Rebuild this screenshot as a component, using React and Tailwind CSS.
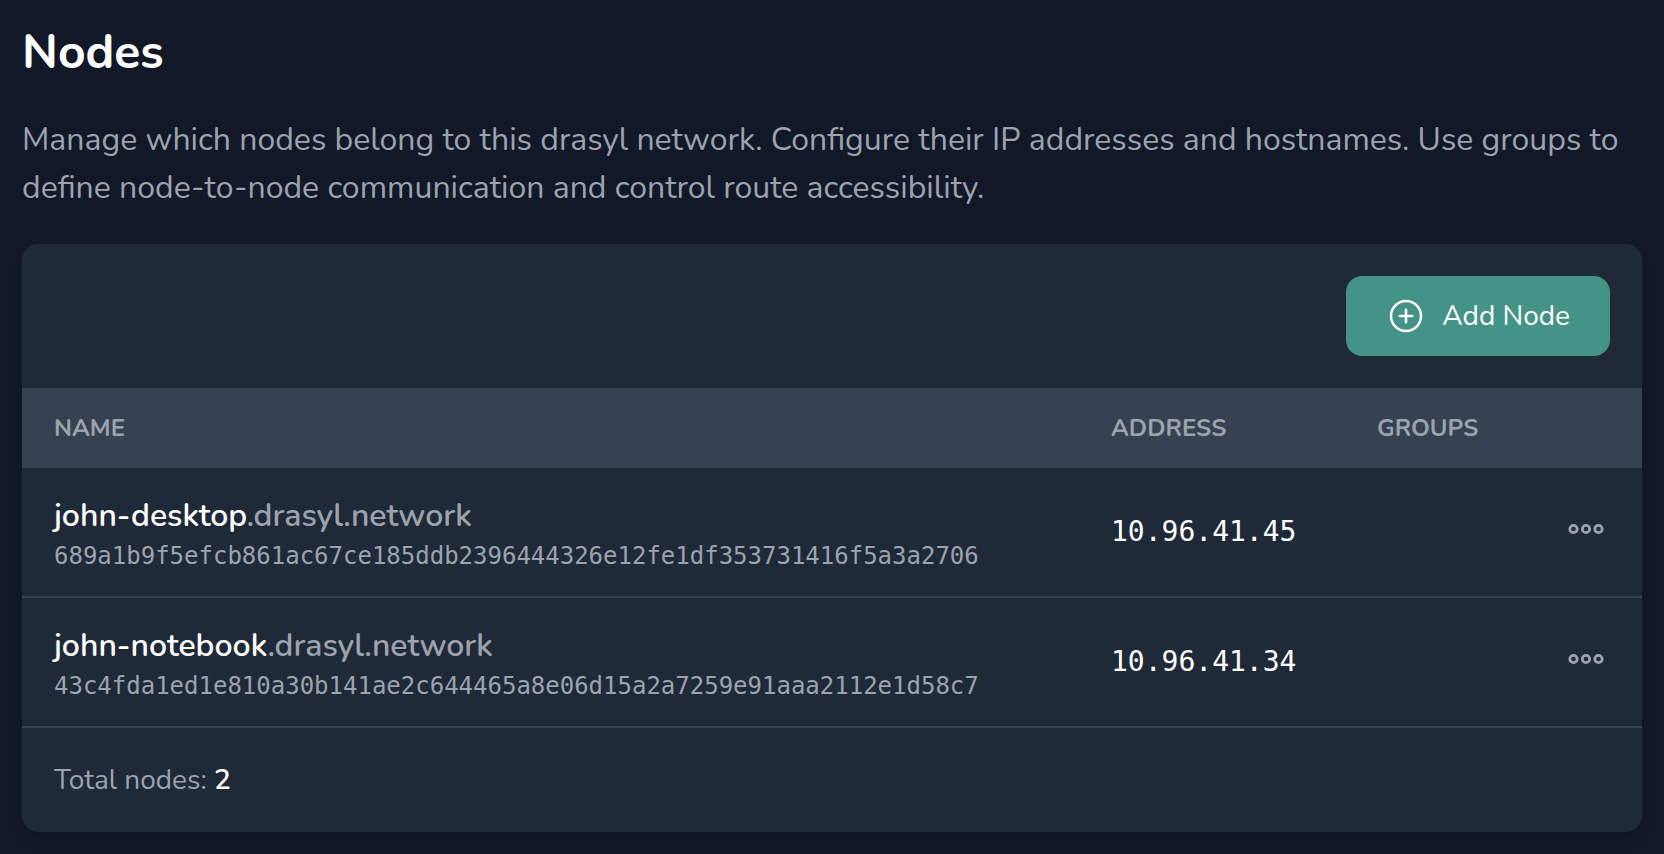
import { IoAddCircleOutline } from "react-icons/io5";

const DOMAIN = ".drasyl.network";

const nodes = [
  {
    name: "john-desktop",
    key: "689a1b9f5efcb861ac67ce185ddb2396444326e12fe1df353731416f5a3a2706",
    address: "10.96.41.45",
  },
  {
    name: "john-notebook",
    key: "43c4fda1ed1e810a30b141ae2c644465a8e06d15a2a7259e91aaa2112e1d58c7",
    address: "10.96.41.34",
  },
];

function DotsIcon() {
  return (
    <svg className="size-12" viewBox="0 0 48 48" fill="none" stroke="currentColor" strokeWidth="2.8" aria-hidden="true">
      <circle cx="11.5" cy="24" r="3.7" />
      <circle cx="24" cy="24" r="3.7" />
      <circle cx="36.5" cy="24" r="3.7" />
    </svg>
  );
}

function HeadCell({ children }) {
  return (
    <th scope="col" className="px-8 py-6 text-left text-2xl font-bold uppercase">
      {children}
    </th>
  );
}

function NodeRow({ node }) {
  return (
    <tr className="border-b-2 border-[#384151]">
      <td className="px-8 py-6">
        <div className="text-[32px] leading-12 font-semibold text-white">
          {node.name}
          <span className="text-[#9ca3af]">{DOMAIN}</span>
        </div>
        <div className="font-['DejaVu_Sans_Mono',monospace] text-2xl">{node.key}</div>
      </td>
      <td className="px-8 font-['DejaVu_Sans_Mono',monospace] text-[28px] text-white">{node.address}</td>
      <td className="px-8"></td>
      <td className="pr-8 pb-1.5">
        <button type="button" className="ml-auto block" aria-label={`Actions for ${node.name}`}>
          <DotsIcon />
        </button>
      </td>
    </tr>
  );
}

export default function App() {
  return (
    <main className="min-h-screen bg-[#121827] px-[22px] pt-7 font-['Nunito','Noto_Sans',sans-serif] text-[#9ca3af]">
      <h1 className="text-5xl font-bold text-white">Nodes</h1>
      <p className="mt-10 text-[32px] leading-12">
        Manage which nodes belong to this drasyl network. Configure their IP addresses and hostnames. Use groups to
        define node-to-node communication and control route accessibility.
      </p>

      <section className="mt-8 overflow-hidden rounded-2xl bg-[#202937] shadow-lg">
        <div className="flex justify-end p-8">
          <button
            type="button"
            className="flex h-20 items-center gap-4 rounded-2xl bg-[#449387] px-10 text-[28px] leading-10 text-white"
          >
            <IoAddCircleOutline className="size-10" />
            <span>Add Node</span>
          </button>
        </div>

        <table className="w-full table-fixed border-collapse">
          <colgroup>
            <col />
            <col className="w-[266px]" />
            <col className="w-[165px]" />
            <col className="w-[132px]" />
          </colgroup>
          <thead className="bg-[#384151]">
            <tr>
              <HeadCell>Name</HeadCell>
              <HeadCell>Address</HeadCell>
              <HeadCell>Groups</HeadCell>
              <td></td>
            </tr>
          </thead>
          <tbody>
            {nodes.map((node) => (
              <NodeRow key={node.key} node={node} />
            ))}
          </tbody>
        </table>

        <div className="p-8 text-[28px] leading-10">
          Total nodes: <span className="font-semibold text-white">{nodes.length}</span>
        </div>
      </section>
    </main>
  );
}
